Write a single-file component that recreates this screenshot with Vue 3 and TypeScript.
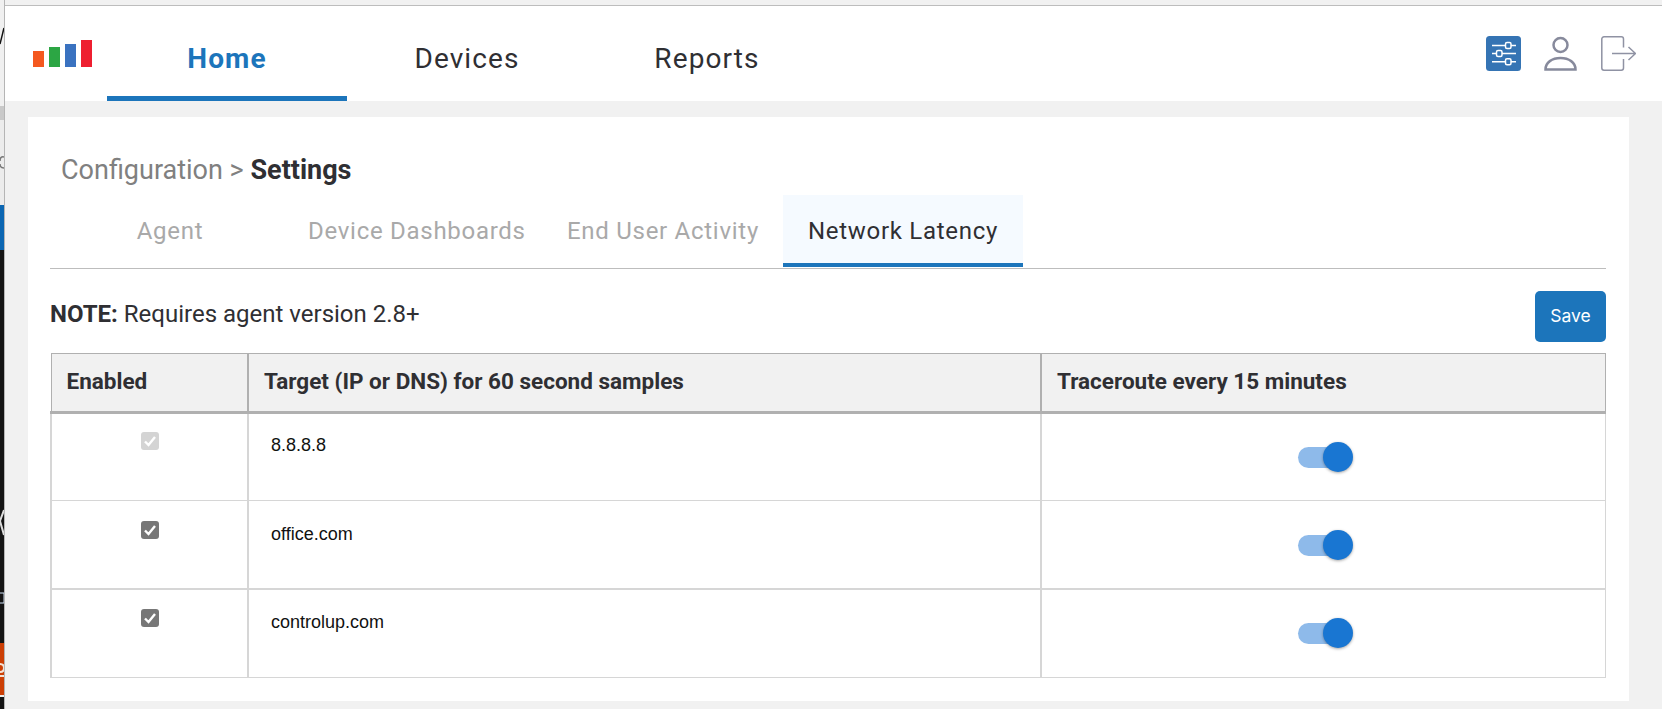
<script setup lang="ts">
const rows = [
  { target: '8.8.8.8', disabled: true },
  { target: 'office.com', disabled: false },
  { target: 'controlup.com', disabled: false },
]
const tabs = ['Agent', 'Device Dashboards', 'End User Activity', 'Network Latency']
</script>

<template>
  <div class="page">
    <div class="strip">
      <svg class="frag" width="4" height="709" viewBox="0 0 4 709" fill="none">
        <path d="M4 28L0 44" stroke="#111" stroke-width="1.500" />
        <path d="M4 157Q0 156 0 161M0 164Q0 168 4 168" stroke="#777" stroke-width="1.500" />
        <path d="M4 510L0 521L4 535" stroke="#ddd" stroke-width="2" />
        <path d="M0 593H4V603H0" stroke="#cfe0f5" stroke-width="1" />
        <path d="M0 664Q4 664 4 668T0 672M0 676H4" stroke="#f4e4d8" stroke-width="2" />
      </svg>
    </div>
    <div class="main">
      <header class="header">
        <div class="logo">
          <i class="b1"></i><i class="b2"></i><i class="b3"></i><i class="b4"></i>
        </div>
        <nav class="nav">
          <a class="nav-item active">Home</a>
          <a class="nav-item">Devices</a>
          <a class="nav-item">Reports</a>
        </nav>
        <div class="icons">
          <svg class="i-set" width="35" height="35" viewBox="0 0 35 35">
            <rect width="35" height="35" rx="3.500" fill="#3574b4" />
            <g stroke="#fff" stroke-width="1.500" fill="none">
              <path d="M6 9.500h24M6 17.500h24M6 25.700h24" />
              <rect x="19.500" y="6.500" width="5.500" height="6" rx="1.500" fill="#3574b4" />
              <rect x="10.500" y="14.500" width="5.500" height="6" rx="1.500" fill="#3574b4" />
              <rect x="19.500" y="22.700" width="5.500" height="6" rx="1.500" fill="#3574b4" />
            </g>
          </svg>
          <svg class="i-user" width="33" height="35" viewBox="0 0 33 35" fill="none" stroke="#878a9c" stroke-width="2.500">
            <circle cx="16.500" cy="9" r="7" />
            <path d="M1.500 33.500c0-7 6.500-11.500 15-11.500s15 4.500 15 11.500z" />
          </svg>
          <svg width="35" height="35" viewBox="0 0 35 35" fill="none" stroke="#8f92a3" stroke-width="1.500">
            <path d="M22.500 11.500V3a2.200 2.200 0 0 0-2.200-2.200H3A2.200 2.200 0 0 0 .8 3v29A2.200 2.200 0 0 0 3 34.200h17.300a2.200 2.200 0 0 0 2.200-2.200v-9" />
            <path d="M11 17.500h23.500M27.500 11l7 6.500-7 6.500" />
          </svg>
        </div>
      </header>
      <main class="content">
        <section class="card">
          <h1 class="crumb">Configuration &gt; <b>Settings</b></h1>
          <div class="tabs">
            <a v-for="(t, i) in tabs" :key="t" class="tab" :class="['t' + i, { on: i === 3 }]">{{ t }}</a>
          </div>
          <div class="note-row">
            <p class="note"><b>NOTE:</b> Requires agent version 2.8+</p>
            <button class="save">Save</button>
          </div>
          <table class="grid">
            <colgroup>
              <col class="c1" /><col class="c2" /><col />
            </colgroup>
            <thead>
              <tr>
                <th>Enabled</th>
                <th>Target (IP or DNS) for 60 second samples</th>
                <th>Traceroute every 15 minutes</th>
              </tr>
            </thead>
            <tbody>
              <tr v-for="r in rows" :key="r.target">
                <td class="check-cell">
                  <span class="check" :class="{ off: r.disabled }">
                    <svg width="18" height="18" viewBox="0 0 18 18">
                      <path d="M4 9.500l3.500 3.500L14 5" fill="none" stroke="#fff" stroke-width="2.400" />
                    </svg>
                  </span>
                </td>
                <td class="target">{{ r.target }}</td>
                <td class="toggle-cell">
                  <span class="toggle"><span class="track"></span><span class="thumb"></span></span>
                </td>
              </tr>
            </tbody>
          </table>
        </section>
      </main>
    </div>
  </div>
</template>

<style>
html, body { margin: 0; background: #f1f1f1; }
</style>

<style scoped>
.page { display: flex; height: 709px; overflow: hidden; font-family: Roboto, sans-serif; color: #2f2f33; }
.strip { position: relative; width: 4px; flex: none; background: linear-gradient(#f0f0f0 0 106px, #c9c9c9 106px 120px, #ececec 120px 205px, #0b66b2 205px 250px, #141414 250px 643px, #cc3f05 643px 695px, #eee 695px 697px, #141414 697px); border-right: 1px solid #b5b5b5; }
.frag { position: absolute; left: 0; top: 0; display: block; }
.main { flex: 1; min-width: 0; background: #f1f1f1; }
.header { height: 95px; margin-top: 5px; border-top: 1px solid #bdbdbd; background: #fff; display: flex; align-items: stretch; }
.logo { display: flex; align-items: flex-end; gap: 4.500px; width: 59px; height: 27px; margin: 34px 0 0 28px; flex: none; }
.logo i { display: block; flex: 1; }
.b1 { height: 16px; background: #f4581f; }
.b2 { height: 20px; background: #2ca644; }
.b3 { height: 23px; background: #3a72c0; }
.b4 { height: 27px; background: #ee1f30; }
.nav { display: flex; margin-left: 15px; }
.nav-item { width: 240px; display: flex; align-items: center; justify-content: center; font-size: 28px; letter-spacing: 1.100px; padding-top: 14px; box-sizing: border-box; border-bottom: 5px solid transparent; }
.nav-item.active { color: #1c75bb; font-weight: 700; border-bottom-color: #1c75bb; }
.icons { margin-left: auto; display: flex; align-items: center; gap: 24px; padding-right: 26px; }
.i-set { margin-right: -1px; }
.content { padding: 16px 33px 8px 23px; }
.card { background: #fff; height: 584px; box-sizing: border-box; padding: 0 23px 0 22px; }
.crumb { margin: 0; padding: 36px 0 0 11px; font-size: 27px; line-height: 34px; font-weight: 400; color: #808080; }
.crumb b { color: #2f2f33; font-weight: 700; }
.tabs { display: flex; height: 74px; margin-top: 8px; border-bottom: 1px solid #bdbdbd; box-sizing: border-box; padding-bottom: 1px; }
.tab { display: flex; align-items: center; justify-content: center; font-size: 24px; letter-spacing: 0.720px; color: #a9a9a9; box-sizing: border-box; white-space: nowrap; }
.t0 { width: 240px; }
.t1 { width: 276px; padding-left: 18px; justify-content: flex-start; }
.t2 { width: 217px; padding-left: 1px; justify-content: flex-start; }
.t3 { width: 240px; }
.tab.on { color: #2f2f33; background: #f5faff; border-bottom: 4px solid #1c75bb; padding-top: 4px; }
.note-row { display: flex; justify-content: space-between; align-items: flex-start; padding-top: 22px; }
.note { margin: 0; padding-top: 10px; font-size: 24px; line-height: 26px; }
.save { width: 71px; height: 51px; border: none; border-radius: 5px; background: #1c75bb; color: #fff; font-family: Inter, sans-serif; font-size: 17.500px; padding: 0 0 2px; }
.grid { width: 100%; margin-top: 11px; border-collapse: collapse; table-layout: fixed; }
.c1 { width: 197px; }
.c2 { width: 793px; }
th { height: 59px; padding: 0 0 3px 15px; background: #f1f1f1; text-align: left; font-size: 22.500px; font-weight: 700; border: 1px solid #b0b0b0; border-bottom: 3px solid #b0b0b0; box-sizing: border-box; }
th + th { border-left-width: 2px; }
td { height: 88px; box-sizing: border-box; padding: 0; border-style: solid; border-color: #d6d6d6; border-width: 0 2px 1px; vertical-align: top; }
td:last-child { border-right-width: 1px; }
tr:nth-child(2) td { border-bottom-width: 2px; }
tr:last-child td { height: 89px; }
.check-cell { text-align: center; }
.check { display: inline-flex; width: 18px; height: 18px; margin-top: 19px; border-radius: 3px; background: #777; }
.check.off { margin-top: 18px; background: #d4d4d4; }
tr:nth-child(2) .check { margin-top: 20px; }
.target { padding: 22px 0 0 22px; font-family: "Liberation Sans", sans-serif; font-size: 18px; color: #111; }
tr:first-child .target { padding-top: 21px; }
tr:nth-child(2) .target { padding-top: 23px; }
.toggle-cell { position: relative; }
.toggle { position: absolute; left: 256px; top: 28px; width: 55px; height: 30px; }
tr:nth-child(2) .toggle { top: 29px; }
.track { position: absolute; left: 0; top: 5px; width: 50px; height: 21px; border-radius: 11px; background: #8ebaea; }
.thumb { position: absolute; right: 0; top: 0; width: 30px; height: 30px; border-radius: 50%; background: #1976d2; box-shadow: 0 1px 3px rgba(0,0,0,.35); }
</style>
